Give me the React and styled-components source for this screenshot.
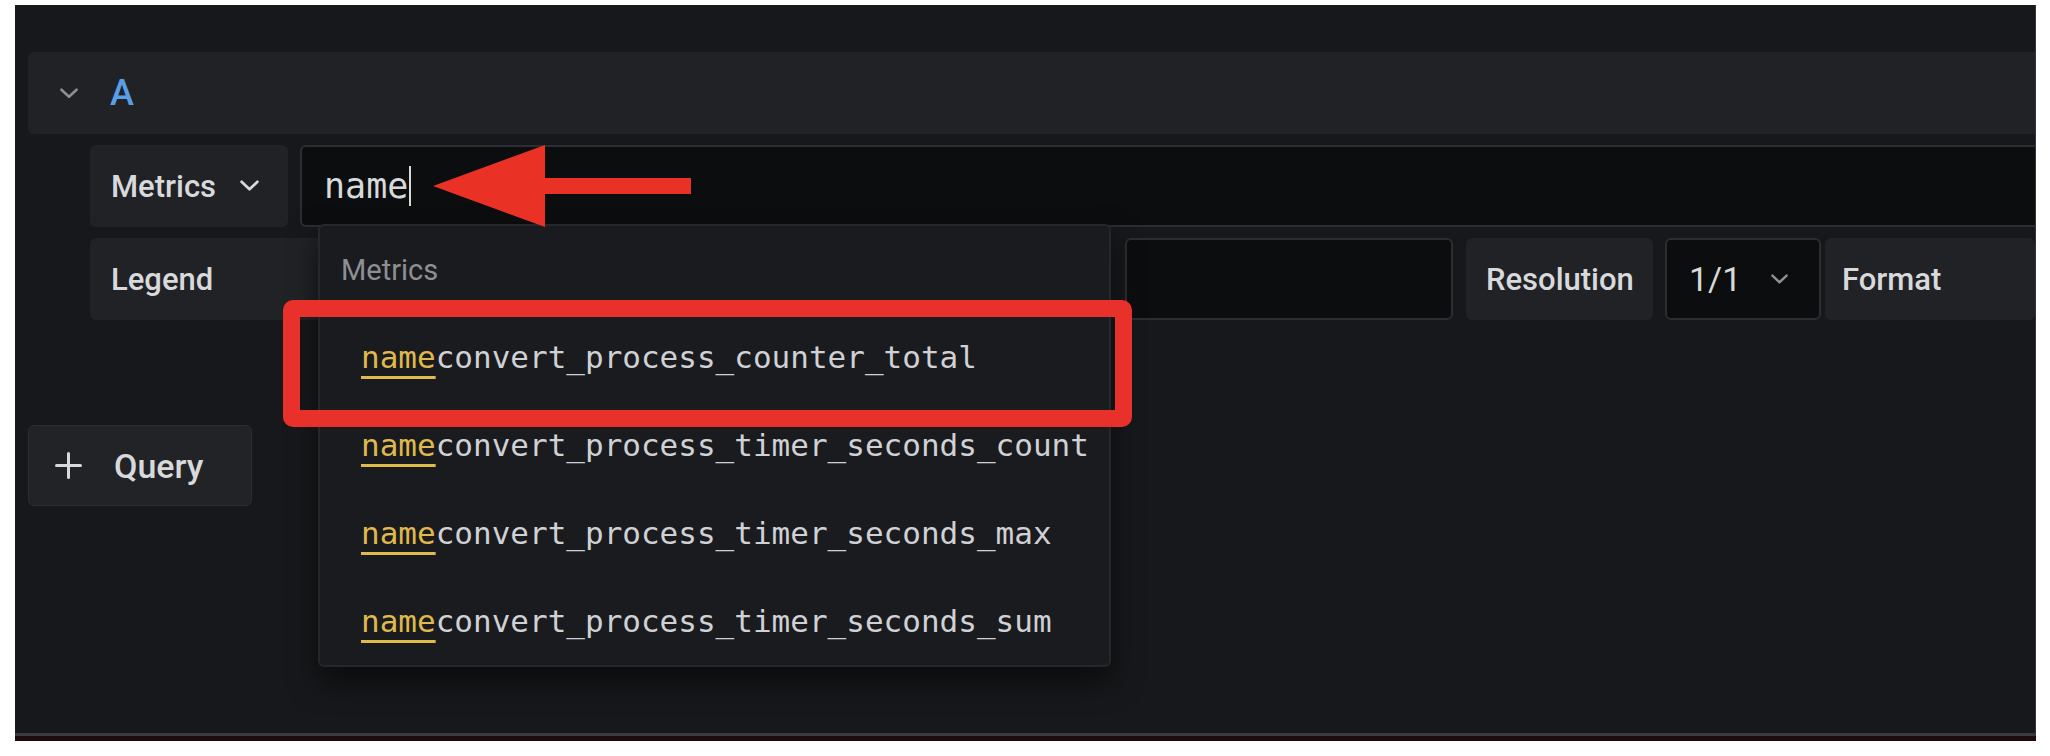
import React from 'react';
import styled, { createGlobalStyle } from 'styled-components';

const GlobalStyle = createGlobalStyle`
  html, body {
    margin: 0;
    padding: 0;
    background: #ffffff;
  }
  body {
    font-family: "Roboto", "Liberation Sans", sans-serif;
  }
`;

const Page = styled.div`
  padding: 5px 0 0 15px;
  width: 2050px;
  height: 756px;
  box-sizing: border-box;
`;

const Panel = styled.div`
  position: relative;
  width: 2021px;
  height: 731px;
  box-sizing: border-box;
  padding: 47px 0 0 13px;
  background: #17181b;
  border-bottom: 3px solid #3a3b3f;
  border-right: 1px solid #35363a;
  overflow: hidden;
  display: flex;
  flex-direction: column;
`;

const BottomStrip = styled.div`
  width: 2021px;
  height: 5px;
  background: #1e0b0c;
`;

const QueryHeader = styled.div`
  height: 82px;
  margin-right: -12px;
  background: #212226;
  border-radius: 6px;
  display: flex;
  align-items: center;
  padding-left: 32px;
  gap: 32px;
`;

const RefId = styled.span`
  color: #5a9fe6;
  font-size: 36px;
  font-weight: 500;
  line-height: 1;
`;

const Rows = styled.div`
  display: flex;
  flex-direction: column;
  gap: 11px;
  margin-top: 11px;
  padding-left: 62px;
`;

const Row = styled.div`
  display: flex;
  align-items: stretch;
  height: 82px;
  gap: ${(p) => p.gap || 12}px;
`;

const Label = styled.div`
  width: ${(p) => p.width}px;
  flex: ${(p) => (p.grow ? '1 0 auto' : 'none')};
  box-sizing: border-box;
  background: #212226;
  border-radius: 6px;
  display: flex;
  align-items: center;
  gap: 24px;
  padding-left: ${(p) => p.pad || 21}px;
  color: #d8d9da;
  font-size: 31px;
  font-weight: 500;
  margin-left: ${(p) => p.offset || 0}px;
`;

const Field = styled.div`
  position: relative;
  width: ${(p) => (p.width ? `${p.width}px` : 'auto')};
  flex: ${(p) => (p.width ? 'none' : '1')};
  margin-right: ${(p) => (p.width ? 0 : -12)}px;
  box-sizing: border-box;
  background: #0c0d0f;
  border: 2px solid #2c2d32;
  border-radius: 6px;
  display: flex;
  align-items: center;
  padding-left: 22px;
`;

const QueryText = styled.span`
  font-family: "DejaVu Sans Mono", "Liberation Mono", monospace;
  font-size: 35px;
  color: #d8d9da;
  display: flex;
  align-items: center;
`;

const Caret = styled.span`
  display: inline-block;
  width: 2px;
  height: 40px;
  margin-left: 1px;
  background: #d8d9da;
`;

const Select = styled.div`
  width: ${(p) => p.width}px;
  box-sizing: border-box;
  background: #0c0d0f;
  border: 2px solid #2c2d32;
  border-radius: 6px;
  display: flex;
  align-items: center;
  padding-left: 22px;
  gap: 30px;
  color: #d8d9da;
  font-size: 34px;
`;

const QueryButton = styled.button`
  margin-top: 105px;
  width: 224px;
  height: 81px;
  box-sizing: border-box;
  background: #222327;
  border: 1px solid #2c2d31;
  border-radius: 6px;
  display: flex;
  align-items: center;
  padding: 0 0 0 26px;
  gap: 32px;
  color: #d8d9da;
  font-family: "Roboto", "Liberation Sans", sans-serif;
  font-size: 34px;
  font-weight: 500;
`;

const Dropdown = styled.div`
  position: absolute;
  left: 303px;
  top: 219px;
  width: 793px;
  box-sizing: border-box;
  background: #1a1b1f;
  border: 2px solid #26272b;
  border-radius: 6px;
  box-shadow: 0 14px 30px rgba(0, 0, 0, 0.55);
  z-index: 2;
`;

const GroupTitle = styled.div`
  height: 87px;
  display: flex;
  align-items: center;
  padding-left: 21px;
  color: #8e8f94;
  font-size: 29px;
  font-weight: 400;
`;

const Item = styled.div`
  height: 88px;
  display: flex;
  align-items: center;
  padding-left: 41px;
  font-family: "DejaVu Sans Mono", "Liberation Mono", monospace;
  font-size: 31px;
  color: #d0d1d4;
  white-space: nowrap;
`;

const Match = styled.span`
  color: #e0b94c;
  text-decoration: underline;
  text-decoration-color: #e0b94c;
  text-decoration-thickness: 3px;
  text-underline-offset: 8px;
`;

const Highlight = styled.div`
  position: absolute;
  left: 268px;
  top: 295px;
  width: 849px;
  height: 127px;
  box-sizing: border-box;
  border: 17px solid #e8312a;
  border-radius: 10px;
  z-index: 3;
`;

const Arrow = styled.svg`
  position: absolute;
  left: 418px;
  top: 140px;
  z-index: 3;
`;

const Chevron = ({ color = '#8e8f94', w = 18 }) => (
  <svg width={w} height={w * 0.58} viewBox="0 0 18 10" fill="none">
    <polyline points="1.5,1.5 9,8.5 16.5,1.5" stroke={color} strokeWidth="2.6" strokeLinecap="round" strokeLinejoin="round" />
  </svg>
);

const Plus = () => (
  <svg width="27" height="27" viewBox="0 0 27 27" fill="none">
    <path d="M13.5 1.5v24M1.5 13.5h24" stroke="#d8d9da" strokeWidth="3" strokeLinecap="round" />
  </svg>
);

const suggestions = [
  'convert_process_counter_total',
  'convert_process_timer_seconds_count',
  'convert_process_timer_seconds_max',
  'convert_process_timer_seconds_sum',
];

const App = () => {
  return (
    <>
      <GlobalStyle />
      <Page>
        <Panel>
          <QueryHeader>
            <Chevron />
            <RefId>A</RefId>
          </QueryHeader>

          <Rows>
            <Row>
              <Label width={198}>
                Metrics
                <Chevron color="#d8d9da" w={19} />
              </Label>
              <Field>
                <QueryText>
                  name
                  <Caret />
                </QueryText>
              </Field>
            </Row>
            <Row>
              <Label width={240}>Legend</Label>
              <Field width={538} />
              <Label width={217}>Min step</Label>
              <Field width={328} style={{ marginLeft: 4 }} />
              <Label width={187} pad={20} offset={1}>Resolution</Label>
              <Select width={156}>
                1/1
                <Chevron color="#8e8f94" w={17} />
              </Select>
              <Label grow pad={17} offset={-8}>Format</Label>
            </Row>
          </Rows>

          <QueryButton>
            <Plus />
            Query
          </QueryButton>

          <Dropdown>
            <GroupTitle>Metrics</GroupTitle>
            {suggestions.map((s) => (
              <Item key={s}>
                <Match>name</Match>
                {s}
              </Item>
            ))}
          </Dropdown>

          <Highlight />

          <Arrow width="258" height="82" viewBox="0 0 258 82">
            <polygon points="0,41 112,0 112,33 258,33 258,49 112,49 112,82" fill="#ea3125" />
          </Arrow>
        </Panel>
        <BottomStrip />
      </Page>
    </>
  );
};

export default App;
